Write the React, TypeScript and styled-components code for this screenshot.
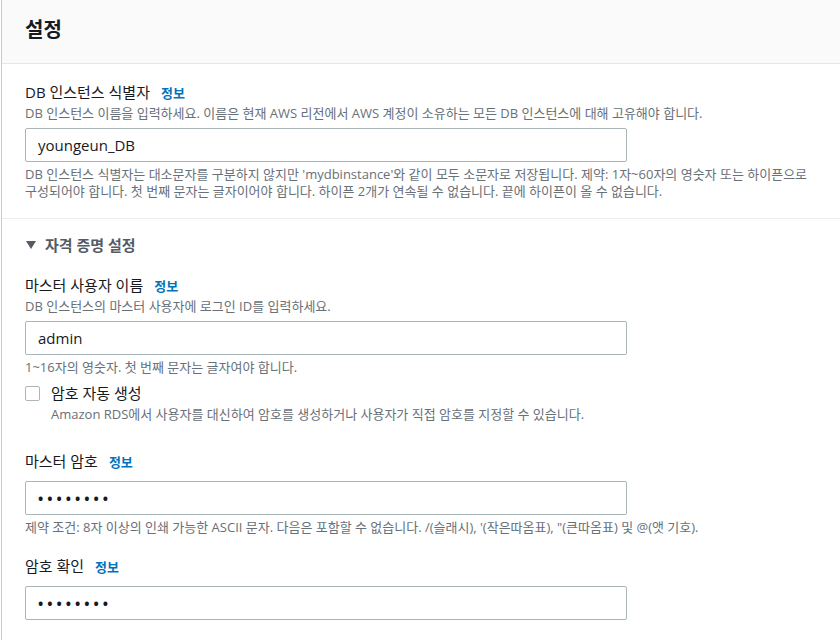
import React from 'react';
import styled, { createGlobalStyle } from 'styled-components';

const GlobalStyle = createGlobalStyle`
  body {
    margin: 0;
    background: #ffffff;
    font-family: "Open Sans", "Noto Sans CJK KR", sans-serif;
    color: #16191f;
  }
`;

/**
 * Panel shell
 */
const Panel = styled.div`
  margin-left: 1px;
  border-left: 1px solid #c6cbd0;
  min-height: 640px;
  background: #ffffff;
`;

const PanelHeader = styled.div`
  height: 64px;
  box-sizing: border-box;
  padding: 0 0 4px 23px;
  display: flex;
  align-items: center;
  background: #fafafa;
  border-bottom: 1px solid #e4e7e9;
`;

const Title = styled.h2`
  margin: 0;
  font-size: 20px;
  font-weight: 700;
  line-height: 24px;
  color: #16191f;
`;

const Section = styled.div<{ divided?: boolean; top?: number }>`
  padding: ${(p) => p.top ?? 18}px 23px 18px;
  border-bottom: ${(p) => (p.divided ? '1px solid #eaeded' : 'none')};
  display: flex;
  flex-direction: column;
`;

/**
 * Form fields
 */
const Field = styled.div<{ gapTop?: number }>`
  display: flex;
  flex-direction: column;
  margin-top: ${(p) => p.gapTop ?? 0}px;
`;

const LabelRow = styled.div`
  display: flex;
  align-items: baseline;
  gap: 11px;
  font-size: 15px;
  line-height: 20px;
  height: 20px;
  color: #16191f;
`;

const InfoLink = styled.a`
  font-size: 13px;
  font-weight: 700;
  color: #0073bb;
  text-decoration: none;
`;

const Description = styled.div`
  font-size: 13px;
  line-height: 16px;
  color: #687078;
  margin-top: 3px;
`;

const Hint = styled.div`
  font-size: 13px;
  line-height: 17px;
  color: #687078;
  margin-top: 4px;
`;

const Input = styled.input<{ tight?: boolean }>`
  box-sizing: border-box;
  width: 602px;
  height: 34px;
  margin-top: ${(p) => (p.tight ? 10 : 7)}px;
  padding: 0 12px;
  border: 1px solid #aab7b8;
  border-radius: 2px;
  font-family: inherit;
  font-size: 15px;
  color: #16191f;
  background: #ffffff;
  outline: none;
`;

const PasswordInput = styled(Input)`
  font-size: 14px;
  letter-spacing: 4px;
  font-weight: 700;
`;

/**
 * Expandable group
 */
const GroupToggle = styled.div`
  display: flex;
  align-items: center;
  gap: 9px;
  font-size: 15px;
  font-weight: 700;
  line-height: 20px;
  color: #545b64;
  margin-bottom: 20px;
`;

const Caret = styled.span`
  width: 0;
  height: 0;
  border-left: 5px solid transparent;
  border-right: 5px solid transparent;
  border-top: 8px solid #545b64;
  margin-left: 1px;
`;

/**
 * Checkbox
 */
const CheckRow = styled.label`
  display: flex;
  gap: 11px;
  margin-top: 7px;
`;

const CheckBox = styled.span`
  box-sizing: border-box;
  width: 15px;
  height: 15px;
  margin-top: 3px;
  border: 1px solid #aab7b8;
  border-radius: 2px;
  flex-shrink: 0;
`;

const CheckText = styled.div`
  display: flex;
  flex-direction: column;
`;

const CheckLabel = styled.span`
  font-size: 15px;
  line-height: 20px;
  color: #16191f;
`;

const Label = ({ text }: { text: string }) => (
  <LabelRow>
    <span>{text}</span>
    <InfoLink href="#">정보</InfoLink>
  </LabelRow>
);

const DOTS = '\u2022\u2022\u2022\u2022\u2022\u2022\u2022\u2022';

export default function App() {
  return (
    <>
      <GlobalStyle />
      <Panel>
        <PanelHeader>
          <Title>설정</Title>
        </PanelHeader>

        <Section divided>
          <Field>
            <Label text="DB 인스턴스 식별자" />
            <Description>
              DB 인스턴스 이름을 입력하세요. 이름은 현재 AWS 리전에서 AWS 계정이 소유하는 모든 DB 인스턴스에 대해 고유해야 합니다.
            </Description>
            <Input defaultValue="youngeun_DB" />
            <Hint>
              DB 인스턴스 식별자는 대소문자를 구분하지 않지만 'mydbinstance'와 같이 모두 소문자로 저장됩니다. 제약: 1자~60자의 영숫자 또는 하이픈으로
              구성되어야 합니다. 첫 번째 문자는 글자이어야 합니다. 하이픈 2개가 연속될 수 없습니다. 끝에 하이픈이 올 수 없습니다.
            </Hint>
          </Field>
        </Section>

        <Section top={16}>
          <GroupToggle>
            <Caret />
            <span>자격 증명 설정</span>
          </GroupToggle>

          <Field>
            <Label text="마스터 사용자 이름" />
            <Description>DB 인스턴스의 마스터 사용자에 로그인 ID를 입력하세요.</Description>
            <Input defaultValue="admin" />
            <Hint>1~16자의 영숫자. 첫 번째 문자는 글자여야 합니다.</Hint>
            <CheckRow>
              <CheckBox />
              <CheckText>
                <CheckLabel>암호 자동 생성</CheckLabel>
                <Description>Amazon RDS에서 사용자를 대신하여 암호를 생성하거나 사용자가 직접 암호를 지정할 수 있습니다.</Description>
              </CheckText>
            </CheckRow>
          </Field>

          <Field gapTop={29}>
            <Label text="마스터 암호" />
            <PasswordInput tight defaultValue={DOTS} />
            <Hint>
              제약 조건: 8자 이상의 인쇄 가능한 ASCII 문자. 다음은 포함할 수 없습니다. /(슬래시), '(작은따옴표), "(큰따옴표) 및 @(앳 기호).
            </Hint>
          </Field>

          <Field gapTop={20}>
            <Label text="암호 확인" />
            <PasswordInput tight defaultValue={DOTS} />
          </Field>
        </Section>
      </Panel>
    </>
  );
}
